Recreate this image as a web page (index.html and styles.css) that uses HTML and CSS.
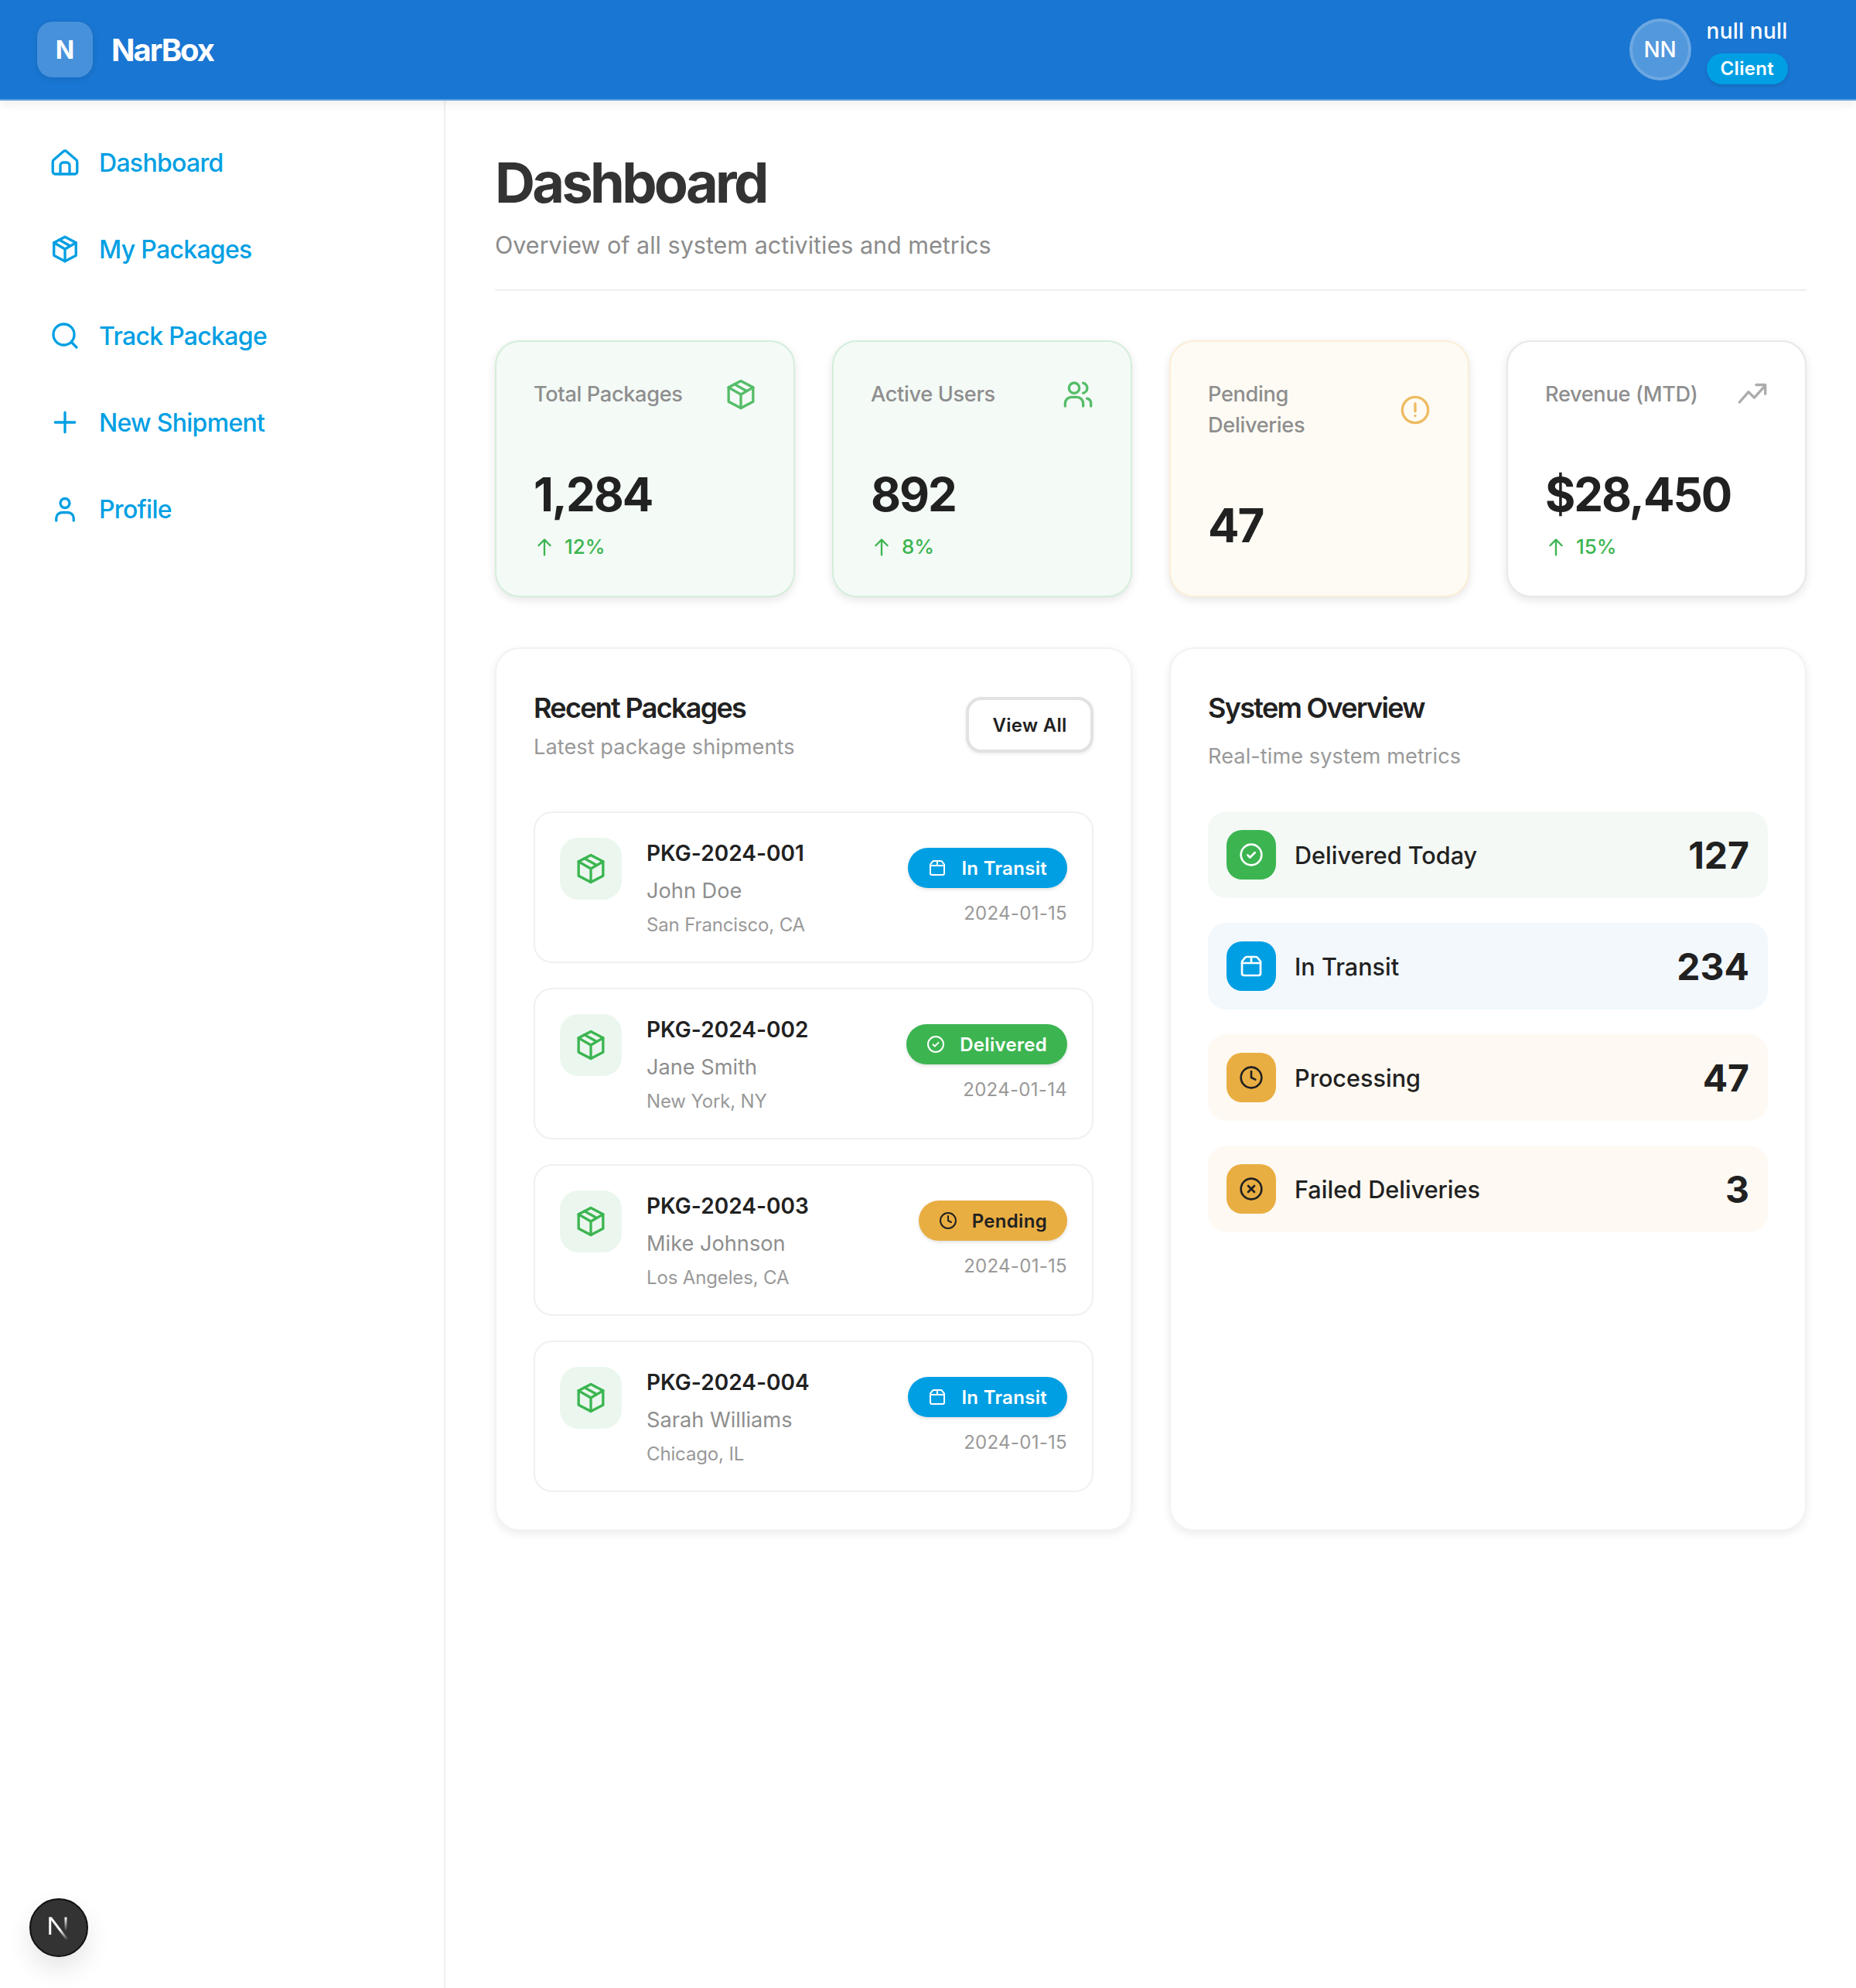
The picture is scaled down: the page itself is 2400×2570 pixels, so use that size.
FILE: index.html
```html
<!DOCTYPE html>
<html>
  <head>
    <title>NarBox Dashboard</title>
    <link rel="stylesheet" href="styles.css">
  </head>
  <body>
    <!-- icon set, used with <use> below -->
    <svg class="icon-defs" xmlns="http://www.w3.org/2000/svg">
      <symbol id="i-home" viewBox="0 0 24 24"><path d="M2.200 9.800 10.700 2.500a2 2 0 0 1 2.600 0L21.800 9.800a2 2 0 0 1 .7 1.500V20a2 2 0 0 1-2 2H3.500a2 2 0 0 1-2-2v-8.700a2 2 0 0 1 .7-1.500z"/><path d="M8 22v-7.500a2.500 2.500 0 0 1 2.500-2.500h3a2.500 2.500 0 0 1 2.500 2.500V22"/></symbol>
      <symbol id="i-package" viewBox="0 0 24 24"><path d="M12 1.500 21.500 6.500v11L12 22.500l-9.500-5v-11z"/><path d="M2.500 6.500 12 12l9.500-5.500M12 12v10.500M7 4l9.500 5.300"/></symbol>
      <symbol id="i-search" viewBox="0 0 24 24"><circle cx="11" cy="11" r="9"/><path d="M18 18l4 4"/></symbol>
      <symbol id="i-plus" viewBox="0 0 24 24"><path d="M12 3.500v17M3.500 12h17"/></symbol>
      <symbol id="i-user" viewBox="0 0 24 24"><circle cx="12" cy="7" r="4"/><path d="M4.500 22v-2a5 5 0 0 1 5-5h5a5 5 0 0 1 5 5v2"/></symbol>
      <symbol id="i-users" viewBox="0 0 24 24"><circle cx="9" cy="7" r="4"/><path d="M2 21v-2a5 5 0 0 1 5-5h4a5 5 0 0 1 5 5v2M16 3.100a4 4 0 0 1 0 7.800M22 21v-2a4 4 0 0 0-3-3.900"/></symbol>
      <symbol id="i-alert" viewBox="0 0 24 24"><circle cx="12" cy="12" r="10"/><path d="M12 7v6M12 16.500v.01"/></symbol>
      <symbol id="i-trend" viewBox="0 0 24 24"><path d="M2 18l7-8 4.500 4.500L22 5M15 4.500h7v7"/></symbol>
      <symbol id="i-up" viewBox="0 0 24 24"><path d="M12 21V4M5.500 10.500 12 4l6.500 6.500"/></symbol>
      <symbol id="i-check" viewBox="0 0 24 24"><circle cx="12" cy="12" r="10"/><path d="M8.500 12.300l2.300 2.300 4.700-4.700"/></symbol>
      <symbol id="i-box" viewBox="0 0 24 24"><path d="M7.500 3h9a2 2 0 0 1 1.600.8L21 7.500V19a2 2 0 0 1-2 2H5a2 2 0 0 1-2-2V7.500l2.900-3.700A2 2 0 0 1 7.500 3z"/><path d="M3 9h18M12 3v6"/></symbol>
      <symbol id="i-clock" viewBox="0 0 24 24"><circle cx="12" cy="12" r="10"/><path d="M12 6v6l4 2"/></symbol>
      <symbol id="i-x" viewBox="0 0 24 24"><circle cx="12" cy="12" r="10"/><path d="M9 9l6 6M15 9l-6 6"/></symbol>
    </svg>

    <header class="topbar">
      <div class="brand">
        <div class="brand-logo">N</div>
        <span class="brand-name">NarBox</span>
      </div>
      <div class="user-menu">
        <div class="avatar">NN</div>
        <div class="user-info">
          <span class="user-name">null null</span>
          <span class="user-role">Client</span>
        </div>
      </div>
    </header>

    <div class="layout">
      <nav class="sidebar">
        <a class="nav-item"><svg class="nav-icon"><use href="#i-home"/></svg>Dashboard</a>
        <a class="nav-item"><svg class="nav-icon"><use href="#i-package"/></svg>My Packages</a>
        <a class="nav-item"><svg class="nav-icon"><use href="#i-search"/></svg>Track Package</a>
        <a class="nav-item"><svg class="nav-icon"><use href="#i-plus"/></svg>New Shipment</a>
        <a class="nav-item"><svg class="nav-icon"><use href="#i-user"/></svg>Profile</a>
      </nav>

      <main class="content">
        <div class="page-head">
          <h1>Dashboard</h1>
          <p>Overview of all system activities and metrics</p>
        </div>

        <section class="stats">
          <div class="stat stat-green">
            <div class="stat-top">
              <span class="stat-label">Total Packages</span>
              <svg class="stat-icon"><use href="#i-package"/></svg>
            </div>
            <div class="stat-value">1,284</div>
            <div class="stat-trend"><svg class="trend-icon"><use href="#i-up"/></svg>12%</div>
          </div>
          <div class="stat stat-green">
            <div class="stat-top">
              <span class="stat-label">Active Users</span>
              <svg class="stat-icon"><use href="#i-users"/></svg>
            </div>
            <div class="stat-value">892</div>
            <div class="stat-trend"><svg class="trend-icon"><use href="#i-up"/></svg>8%</div>
          </div>
          <div class="stat stat-orange">
            <div class="stat-top stat-top-center">
              <span class="stat-label">Pending Deliveries</span>
              <svg class="stat-icon"><use href="#i-alert"/></svg>
            </div>
            <div class="stat-value">47</div>
          </div>
          <div class="stat stat-plain">
            <div class="stat-top">
              <span class="stat-label">Revenue (MTD)</span>
              <svg class="stat-icon"><use href="#i-trend"/></svg>
            </div>
            <div class="stat-value">$28,450</div>
            <div class="stat-trend"><svg class="trend-icon"><use href="#i-up"/></svg>15%</div>
          </div>
        </section>

        <section class="panels">
          <div class="panel">
            <div class="panel-head">
              <div>
                <h2>Recent Packages</h2>
                <p class="panel-sub">Latest package shipments</p>
              </div>
              <button class="view-all">View All</button>
            </div>
            <div class="package-list">
              <div class="package">
                <div class="package-icon"><svg><use href="#i-package"/></svg></div>
                <div class="package-info">
                  <div class="package-id">PKG-2024-001</div>
                  <div class="package-name">John Doe</div>
                  <div class="package-place">San Francisco, CA</div>
                </div>
                <div class="package-side">
                  <span class="badge badge-blue"><svg><use href="#i-box"/></svg>In Transit</span>
                  <span class="package-date">2024-01-15</span>
                </div>
              </div>
              <div class="package">
                <div class="package-icon"><svg><use href="#i-package"/></svg></div>
                <div class="package-info">
                  <div class="package-id">PKG-2024-002</div>
                  <div class="package-name">Jane Smith</div>
                  <div class="package-place">New York, NY</div>
                </div>
                <div class="package-side">
                  <span class="badge badge-green"><svg><use href="#i-check"/></svg>Delivered</span>
                  <span class="package-date">2024-01-14</span>
                </div>
              </div>
              <div class="package">
                <div class="package-icon"><svg><use href="#i-package"/></svg></div>
                <div class="package-info">
                  <div class="package-id">PKG-2024-003</div>
                  <div class="package-name">Mike Johnson</div>
                  <div class="package-place">Los Angeles, CA</div>
                </div>
                <div class="package-side">
                  <span class="badge badge-orange"><svg><use href="#i-clock"/></svg>Pending</span>
                  <span class="package-date">2024-01-15</span>
                </div>
              </div>
              <div class="package">
                <div class="package-icon"><svg><use href="#i-package"/></svg></div>
                <div class="package-info">
                  <div class="package-id">PKG-2024-004</div>
                  <div class="package-name">Sarah Williams</div>
                  <div class="package-place">Chicago, IL</div>
                </div>
                <div class="package-side">
                  <span class="badge badge-blue"><svg><use href="#i-box"/></svg>In Transit</span>
                  <span class="package-date">2024-01-15</span>
                </div>
              </div>
            </div>
          </div>

          <div class="panel">
            <div class="panel-head panel-head-stack">
              <h2>System Overview</h2>
              <p class="panel-sub">Real-time system metrics</p>
            </div>
            <div class="metric-list">
              <div class="metric metric-green">
                <div class="metric-icon"><svg><use href="#i-check"/></svg></div>
                <span class="metric-label">Delivered Today</span>
                <span class="metric-value">127</span>
              </div>
              <div class="metric metric-blue">
                <div class="metric-icon"><svg><use href="#i-box"/></svg></div>
                <span class="metric-label">In Transit</span>
                <span class="metric-value">234</span>
              </div>
              <div class="metric metric-orange">
                <div class="metric-icon"><svg><use href="#i-clock"/></svg></div>
                <span class="metric-label">Processing</span>
                <span class="metric-value">47</span>
              </div>
              <div class="metric metric-orange">
                <div class="metric-icon"><svg><use href="#i-x"/></svg></div>
                <span class="metric-label">Failed Deliveries</span>
                <span class="metric-value">3</span>
              </div>
            </div>
          </div>
        </section>
      </main>
    </div>

    <!-- dev tools bubble -->
    <div class="dev-badge">
      <svg viewBox="0 0 24 24" width="36" height="36">
        <defs>
          <linearGradient id="n-slash" x1="0" y1="0" x2="1" y2="1"><stop offset="0.55" stop-color="#fff"/><stop offset="1" stop-color="#fff" stop-opacity="0"/></linearGradient>
          <linearGradient id="n-bar" x1="0" y1="0" x2="0" y2="1"><stop offset="0" stop-color="#fff"/><stop offset="0.8" stop-color="#fff" stop-opacity="0"/></linearGradient>
        </defs>
        <path d="M3.500 3h2v15h-2z" fill="#fff"/>
        <path d="M3.500 3H6l14 18.500-1.800 1z" fill="url(#n-slash)"/>
        <path d="M17 3h2v15h-2z" fill="url(#n-bar)"/>
      </svg>
    </div>
  </body>
</html>
```

FILE: styles.css
```css
* {
  box-sizing: border-box;
}
body {
  margin: 0;
  min-height: 2570px;
  display: flex;
  flex-direction: column;
  font-family: Inter, "Noto Sans", sans-serif;
  color: #212121;
  background: #fff;
}
.icon-defs {
  display: none;
}
svg {
  fill: none;
  stroke: currentColor;
  stroke-width: 2;
  stroke-linecap: round;
  stroke-linejoin: round;
  flex-shrink: 0;
}

/* top bar */
.topbar {
  height: 130px;
  padding: 0 88px 0 48px;
  display: flex;
  justify-content: space-between;
  align-items: center;
  background: #1976d2;
  border-bottom: 2px solid #5c9de0;
  box-shadow: 0 4px 12px rgba(0, 0, 0, 0.08);
  color: #fff;
  position: relative;
}
.brand {
  display: flex;
  align-items: center;
  gap: 24px;
}
.brand-logo {
  width: 72px;
  height: 72px;
  border-radius: 20px;
  background: rgba(255, 255, 255, 0.2);
  box-shadow: 0 2px 8px rgba(0, 0, 0, 0.1);
  display: flex;
  align-items: center;
  justify-content: center;
  font-size: 32px;
  font-weight: 700;
}
.brand-name {
  font-size: 40px;
  font-weight: 700;
  letter-spacing: -2px;
}
.user-menu {
  display: flex;
  align-items: center;
  gap: 20px;
}
.avatar {
  width: 80px;
  height: 80px;
  border-radius: 50%;
  background: rgba(255, 255, 255, 0.25);
  border: 4px solid rgba(255, 255, 255, 0.15);
  display: flex;
  align-items: center;
  justify-content: center;
  font-size: 28px;
  font-weight: 500;
}
.user-info {
  padding-top: 2px;
  display: flex;
  flex-direction: column;
  align-items: flex-start;
  gap: 11px;
}
.user-name {
  font-size: 28px;
  font-weight: 500;
  line-height: 36px;
  letter-spacing: 0.2px;
}
.user-role {
  height: 40px;
  padding: 0 18px;
  border-radius: 20px;
  background: #009fe3;
  box-shadow: 0 2px 4px rgba(0, 0, 0, 0.12);
  font-size: 24px;
  font-weight: 600;
  line-height: 40px;
  letter-spacing: 0.3px;
}

/* page frame */
.layout {
  flex: 1;
  display: flex;
}
.sidebar {
  width: 576px;
  flex-shrink: 0;
  padding: 24px 48px;
  border-right: 2px solid #f0f0f0;
}
.nav-item {
  height: 112px;
  padding-left: 18px;
  display: flex;
  align-items: center;
  gap: 26px;
  color: #009fe3;
  font-size: 32px;
  font-weight: 500;
  letter-spacing: -0.7px;
}
.nav-icon {
  width: 36px;
  height: 36px;
  stroke-width: 2.200;
}
.content {
  flex: 1;
  min-width: 0;
  padding: 64px;
}
.page-head {
  padding-bottom: 33px;
  margin-bottom: 64px;
  border-bottom: 2px solid #eee;
}
h1 {
  margin: 0 0 15px;
  font-size: 72px;
  font-weight: 700;
  line-height: 84px;
  letter-spacing: -3.700px;
  color: #333;
}
.page-head p {
  margin: 0;
  font-size: 30.500px;
  line-height: 48px;
  color: #8c8c8c;
}

/* stat cards */
.stats {
  display: grid;
  grid-template-columns: repeat(4, 1fr);
  gap: 48px;
  margin-bottom: 65px;
}
.stat {
  height: 332px;
  padding: 48px;
  border: 2px solid #e8e8e8;
  border-radius: 32px;
  background: #fff;
  box-shadow: 0 4px 12px rgba(0, 0, 0, 0.1);
}
.stat-green {
  background: #f4faf6;
  border-color: #d5eedb;
}
.stat-orange {
  background: #fefbf4;
  border-color: #fbeed7;
}
.stat-top {
  display: flex;
  justify-content: space-between;
  align-items: flex-start;
  gap: 24px;
  margin-bottom: 70px;
}
.stat-top-center {
  align-items: center;
}
.stat-label {
  font-size: 27.200px;
  font-weight: 500;
  line-height: 40px;
  letter-spacing: -0.35px;
  color: #8e8e8e;
}
.stat-icon {
  width: 40px;
  height: 40px;
}
.stat-green .stat-icon {
  color: #55bd68;
}
.stat-orange .stat-icon {
  color: #efbb62;
}
.stat-plain .stat-icon {
  color: #ababab;
}
.stat-value {
  font-size: 60px;
  font-weight: 700;
  line-height: 78px;
  letter-spacing: -2px;
}
.stat-trend {
  margin-top: 14px;
  display: flex;
  align-items: center;
  gap: 12px;
  font-size: 26px;
  font-weight: 500;
  line-height: 30px;
  color: #3cb551;
}
.trend-icon {
  width: 28px;
  height: 28px;
}

/* bottom panels */
.panels {
  display: grid;
  grid-template-columns: 1fr 1fr;
  gap: 48px;
}
.panel {
  height: 1142px;
  padding: 48px;
  border: 2px solid #f2f2f2;
  border-radius: 32px;
  box-shadow: 0 4px 12px rgba(0, 0, 0, 0.08);
}
.panel-head {
  height: 162px;
  display: flex;
  justify-content: space-between;
  align-items: flex-start;
}
.panel-head-stack {
  flex-direction: column;
  justify-content: flex-start;
}
h2 {
  margin: 0;
  font-size: 36px;
  font-weight: 600;
  line-height: 56px;
  letter-spacing: -1.700px;
}
.panel-sub {
  margin: 3px 0 0;
  font-size: 27.200px;
  line-height: 40px;
  letter-spacing: 0.05px;
  color: #999;
}
.panel-head-stack .panel-sub {
  margin-top: 15px;
}
.view-all {
  width: 165px;
  height: 72px;
  margin-top: 14px;
  border: 4px solid #e2e2e2;
  border-radius: 20px;
  background: #fff;
  box-shadow: 0 2px 4px rgba(0, 0, 0, 0.08);
  font-family: inherit;
  font-size: 24px;
  font-weight: 600;
  letter-spacing: 0.3px;
  color: #212121;
}

/* package rows */
.package-list,
.metric-list {
  display: flex;
  flex-direction: column;
  gap: 32px;
}
.package {
  height: 196px;
  padding: 32px;
  border: 2px solid #f0f0f0;
  border-radius: 24px;
  display: flex;
  gap: 32px;
}
.package-icon {
  width: 80px;
  height: 80px;
  flex-shrink: 0;
  border-radius: 24px;
  background: #ebf7ee;
  color: #3cb551;
  display: flex;
  align-items: center;
  justify-content: center;
}
.package-icon svg {
  width: 40px;
  height: 40px;
}
.package-info {
  flex: 1;
}
.package-id {
  font-size: 28px;
  font-weight: 600;
  line-height: 40px;
  letter-spacing: 0.05px;
}
.package-name {
  margin-top: 9px;
  font-size: 27.200px;
  line-height: 40px;
  color: #8e8e8e;
}
.package-place {
  margin-top: 6px;
  font-size: 24px;
  line-height: 36px;
  letter-spacing: -0.15px;
  color: #999;
}
.package-side {
  display: flex;
  flex-direction: column;
  align-items: flex-end;
  gap: 15px;
  padding-top: 13px;
}
.badge {
  height: 52px;
  padding: 0 26px;
  border-radius: 26px;
  display: flex;
  align-items: center;
  gap: 19px;
  font-size: 24px;
  font-weight: 600;
  letter-spacing: 0.3px;
  color: #fff;
  box-shadow: 0 2px 4px rgba(0, 0, 0, 0.12);
}
.badge svg {
  width: 24px;
  height: 24px;
}
.badge-blue {
  background: #009fe3;
}
.badge-green {
  background: #3cb551;
}
.badge-orange {
  background: #e9ae42;
  color: #212121;
}
.package-date {
  font-size: 24px;
  line-height: 36px;
  letter-spacing: 0.3px;
  color: #999;
}

/* system metrics */
.metric {
  height: 112px;
  padding: 0 24px;
  border-radius: 24px;
  display: flex;
  align-items: center;
  gap: 24px;
}
.metric-green {
  background: #f4f9f5;
}
.metric-blue {
  background: #f2f8fc;
}
.metric-orange {
  background: #fef9f2;
}
.metric-icon {
  width: 64px;
  height: 64px;
  flex-shrink: 0;
  border-radius: 20px;
  display: flex;
  align-items: center;
  justify-content: center;
  color: #fff;
}
.metric-icon svg {
  width: 32px;
  height: 32px;
}
.metric-green .metric-icon {
  background: #3cb551;
}
.metric-blue .metric-icon {
  background: #009fe3;
}
.metric-orange .metric-icon {
  background: #e9ae42;
  color: #212121;
}
.metric-label {
  flex: 1;
  font-size: 30.600px;
  font-weight: 500;
}
.metric-value {
  font-size: 48px;
  font-weight: 700;
}

/* floating dev bubble */
.dev-badge {
  position: absolute;
  left: 38px;
  top: 2454px;
  width: 76px;
  height: 76px;
  border-radius: 50%;
  background: #333;
  border: 2px solid #111;
  box-shadow: 0 16px 32px rgba(0, 0, 0, 0.1);
  display: flex;
  align-items: center;
  justify-content: center;
}
.dev-badge svg {
  stroke: none;
}
```
